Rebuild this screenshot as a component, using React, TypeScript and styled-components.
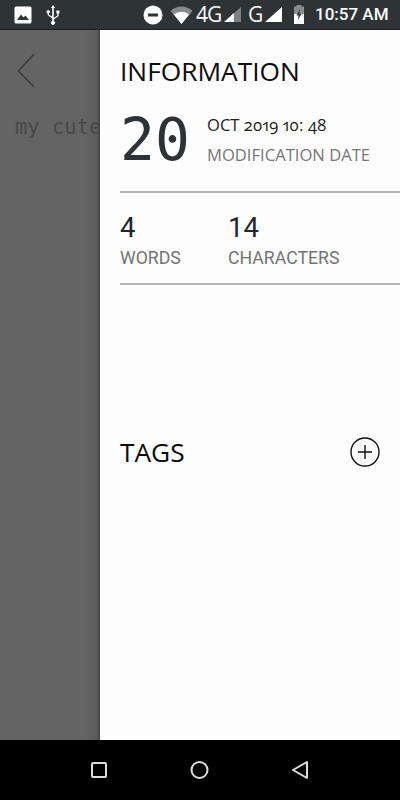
import React from "react";
import styled, { createGlobalStyle } from "styled-components";

const Global = createGlobalStyle`
  html, body { margin: 0; padding: 0; background: #000; }
  #root { width: 400px; height: 800px; overflow: hidden; }
`;

const Screen = styled.div`
  width: 400px;
  height: 800px;
  display: flex;
  flex-direction: column;
`;

const StatusBar = styled.div`
  height: 30px;
  flex: none;
  background: #2e3336;
  border-bottom: 1px solid #1c1e20;
  display: flex;
  align-items: center;
  color: #fff;
  padding: 0 10px 0 14px;
  box-sizing: border-box;
`;
const StatusGroup = styled.div`
  display: flex;
  align-items: center;
  gap: 13px;
`;
const StatusRight = styled.div`
  margin-left: auto;
  display: flex;
  align-items: center;
`;
const NetLabel = styled.span<{ $width: number; $gap: number }>`
  width: ${(p) => p.$width}px;
  margin-left: ${(p) => p.$gap}px;
  flex: none;
  font: 400 21px/29px "Open Sans", sans-serif;
  letter-spacing: -1px;
  white-space: nowrap;
`;
const Clock = styled.span`
  font: 500 17px/29px Roboto, sans-serif;
  margin-left: 10px;
  width: 75px;
  white-space: nowrap;
`;

const Main = styled.div`
  flex: 1;
  display: flex;
  min-height: 0;
`;
const Backdrop = styled.div`
  width: 100px;
  flex: none;
  background: linear-gradient(90deg, #646464 0%, #646464 84%, #5c5c5c 97%, #404040 100%);
  overflow: hidden;
  display: flex;
  flex-direction: column;
  padding: 23px 0 0 15px;
  box-sizing: border-box;
`;
const BackIcon = styled.svg`
  display: block;
  width: 20px;
  height: 36px;
  margin-left: 2px;
`;
const NoteText = styled.div`
  font: 400 20.5px/28px "DejaVu Sans Mono", monospace;
  color: #484848;
  white-space: nowrap;
  margin-top: 24px;
`;

const Panel = styled.div`
  flex: 1;
  background: #fdfdfd;
  padding: 24px 0 0 20px;
  box-sizing: border-box;
  display: flex;
  flex-direction: column;
`;
const Heading = styled.div`
  font: 400 26.3px/34px "Open Sans", sans-serif;
  color: #0c0c0c;
`;
const DateRow = styled.div`
  display: flex;
  align-items: flex-start;
  margin-top: 8px;
  height: 95px;
`;
const Day = styled.div`
  font: 400 58px/68px "DejaVu Sans Mono", monospace;
  color: #2b3238;
  width: 87px;
  flex: none;
  margin-top: 10px;
`;
const DateInfo = styled.div`
  display: flex;
  flex-direction: column;
  padding-top: 17px;
`;
const DateLine = styled.div`
  font: 400 16.6px/24px "Open Sans", sans-serif;
  font-feature-settings: "onum", "pnum";
  color: #1c1c1c;
  white-space: nowrap;
`;
const DateCaption = styled.div`
  font: 400 16.6px/24px "Open Sans", sans-serif;
  color: #777;
  margin-top: 6px;
  white-space: nowrap;
`;
const Divider = styled.div`
  height: 2px;
  background: #b4b4b4;
  flex: none;
`;
const Stats = styled.div`
  display: flex;
  height: 90px;
  padding-top: 17px;
  box-sizing: border-box;
`;
const Stat = styled.div<{ $width: number }>`
  width: ${(p) => p.$width}px;
  flex: none;
`;
const StatValue = styled.div`
  font: 400 27.5px/36px Roboto, sans-serif;
  color: #20272d;
`;
const StatLabel = styled.div`
  font: 400 17.7px/24px Roboto, sans-serif;
  color: #747474;
`;
const TagsRow = styled.div`
  display: flex;
  align-items: center;
  justify-content: space-between;
  margin-top: 150px;
  padding-right: 20px;
`;
const AddIcon = styled.svg`
  display: block;
  width: 30px;
  height: 30px;
`;

const NavBar = styled.div`
  height: 60px;
  flex: none;
  background: #000;
  display: flex;
  align-items: center;
  justify-content: center;
  gap: 83px;
  padding-right: 1px;
`;
const NavIcon = styled.svg<{ $width: number }>`
  display: block;
  width: ${(p) => p.$width}px;
  height: 18px;
`;
const StatusIcon = styled.svg<{ $gap?: number }>`
  display: block;
  flex: none;
  margin-left: ${(p) => p.$gap ?? 0}px;
`;

export default function App() {
  return (
    <Screen>
      <Global />
      <StatusBar>
        <StatusGroup>
          <svg width="18" height="18" viewBox="0 0 18 18">
            <rect x="0.5" y="0.5" width="17" height="17" rx="1.5" fill="#fff" />
            <path d="M3 14 L7 8.5 L9.5 11.5 L11.5 9.5 L15 14 Z" fill="#2e3336" />
          </svg>
          <svg width="16" height="20" viewBox="0 0 16 20" fill="#fff">
            <path d="M8 0 L10 3 H8.8 V13 L12.4 10.4 V8.6 H11.4 V5.6 H14.4 V8.6 H13.6 V11 L8.8 14.4 V16 A2 2 0 1 1 7.2 16 V13.4 L2.6 10 V8.2 A1.6 1.6 0 1 1 3.8 8.2 V9.4 L7.2 11.8 V3 H6 Z" />
          </svg>
        </StatusGroup>
        <StatusRight>
          <StatusIcon width="20" height="20" viewBox="0 0 20 20">
            <circle cx="10" cy="10" r="9.5" fill="#fff" />
            <rect x="5" y="8.5" width="10" height="3" fill="#2e3336" />
          </StatusIcon>
          <StatusIcon $gap={7} width="23" height="18" viewBox="0 0 22 18">
            <path d="M0 5 C6 -1 16 -1 22 5 L11 18 Z" fill="#868a8c" />
            <path d="M3.4 8.6 C8 4.8 14 4.8 18.6 8.6 L11 18 Z" fill="#fff" />
          </StatusIcon>
          <NetLabel $width={24} $gap={3}>4G</NetLabel>
          <StatusIcon $gap={4} width="18" height="16" viewBox="0 0 18 16">
            <path d="M0 15 L17 0 V15 Z" fill="#7c8082" />
            <path d="M0 15 L10 6 V15 Z" fill="#fff" />
          </StatusIcon>
          <NetLabel $width={13} $gap={6}>G</NetLabel>
          <StatusIcon $gap={4} width="18" height="16" viewBox="0 0 18 16">
            <path d="M0 15 L17 0 V15 Z" fill="#fff" />
          </StatusIcon>
          <StatusIcon $gap={10} width="12" height="19" viewBox="0 0 12 19">
            <path d="M3.5 0 H8.5 V1.5 H11 V19 H1 V1.5 H3.5 Z" fill="#888c8e" />
            <path d="M1 9 H11 V19 H1 Z" fill="#fff" />
            <path d="M7 4 L3.5 10.5 H5.6 L5 15 L8.5 8.8 H6.4 Z" fill="#2e3336" />
          </StatusIcon>
          <Clock>10:57 AM</Clock>
        </StatusRight>
      </StatusBar>
      <Main>
        <Backdrop>
          <BackIcon viewBox="0 0 20 36" fill="none" stroke="#3d3d3d" strokeWidth="1.6">
            <path d="M17 1 L1.5 18 L17 34" />
          </BackIcon>
          <NoteText>my cute</NoteText>
        </Backdrop>
        <Panel>
          <Heading>INFORMATION</Heading>
          <DateRow>
            <Day>20</Day>
            <DateInfo>
              <DateLine>OCT 2019 10: 48</DateLine>
              <DateCaption>MODIFICATION DATE</DateCaption>
            </DateInfo>
          </DateRow>
          <Divider />
          <Stats>
            <Stat $width={108}>
              <StatValue>4</StatValue>
              <StatLabel>WORDS</StatLabel>
            </Stat>
            <Stat $width={140}>
              <StatValue>14</StatValue>
              <StatLabel>CHARACTERS</StatLabel>
            </Stat>
          </Stats>
          <Divider />
          <TagsRow>
            <Heading>TAGS</Heading>
            <AddIcon viewBox="0 0 30 30" fill="none" stroke="#111" strokeWidth="1.4">
              <circle cx="15" cy="15" r="14" />
              <path d="M8 15 H22 M15 8 V22" />
            </AddIcon>
          </TagsRow>
        </Panel>
      </Main>
      <NavBar>
        <NavIcon $width={16} viewBox="0 0 16 18" fill="none" stroke="#dcdcdc" strokeWidth="2" strokeLinejoin="round">
          <rect x="1" y="2" width="14" height="14" rx="1" />
        </NavIcon>
        <NavIcon $width={19} viewBox="0 0 19 18" fill="none" stroke="#dcdcdc" strokeWidth="2">
          <circle cx="9.5" cy="9" r="8" />
        </NavIcon>
        <NavIcon $width={16} viewBox="0 0 16 18" fill="none" stroke="#dcdcdc" strokeWidth="2" strokeLinejoin="round">
          <path d="M15 1 V17 L1 9 Z" />
        </NavIcon>
      </NavBar>
    </Screen>
  );
}
